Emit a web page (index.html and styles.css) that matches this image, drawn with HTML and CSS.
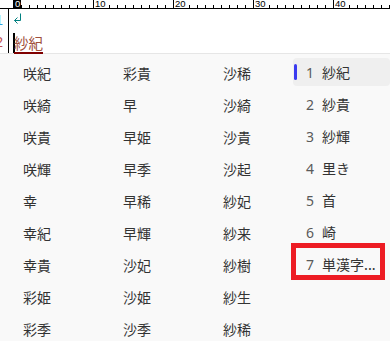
FILE: index.html
```html
<!DOCTYPE html>
<html lang="ja">
<head>
<meta charset="utf-8">
<link rel="stylesheet" href="styles.css">
</head>
<body>
<div class="ruler">
  <div class="grp"><span class="lbl cur">0</span></div>
  <div class="grp"><span class="lbl">10</span></div>
  <div class="grp"><span class="lbl">20</span></div>
  <div class="grp"><span class="lbl">30</span></div>
  <div class="grp last"><span class="lbl">40</span></div>
</div>
<div class="editor">
  <div class="gutter">
    <div class="ln ln1"><span>1</span></div>
    <div class="ln ln2"><span>2</span></div>
  </div>
  <div class="lines">
    <div class="line">
      <svg class="ret" width="9" height="11" viewBox="0 0 9 11"><path d="M7.5 0.5 V7.5 H1.5 M4.5 4.5 L1.5 7.5 L4.5 10.5" fill="none" stroke="#008080" stroke-width="1"/></svg>
    </div>
    <div class="line"><span class="caret"></span><span class="comp">紗紀</span></div>
  </div>
</div>
<div class="panel">
  <div class="col c1">
    <div class="cand">咲紀</div><div class="cand">咲綺</div><div class="cand">咲貴</div><div class="cand">咲輝</div><div class="cand">幸</div><div class="cand">幸紀</div><div class="cand">幸貴</div><div class="cand">彩姫</div><div class="cand">彩季</div>
  </div>
  <div class="col c2">
    <div class="cand">彩貴</div><div class="cand">早</div><div class="cand">早姫</div><div class="cand">早季</div><div class="cand">早稀</div><div class="cand">早輝</div><div class="cand">沙妃</div><div class="cand">沙姫</div><div class="cand">沙季</div>
  </div>
  <div class="col c3">
    <div class="cand">沙稀</div><div class="cand">沙綺</div><div class="cand">沙貴</div><div class="cand">沙起</div><div class="cand">紗妃</div><div class="cand">紗来</div><div class="cand">紗樹</div><div class="cand">紗生</div><div class="cand">紗稀</div>
  </div>
  <div class="col c4">
    <div class="item sel"><span class="num">1</span><span class="txt">紗紀</span></div>
    <div class="item"><span class="num">2</span><span class="txt">紗貴</span></div>
    <div class="item"><span class="num">3</span><span class="txt">紗輝</span></div>
    <div class="item"><span class="num">4</span><span class="txt">里き</span></div>
    <div class="item"><span class="num">5</span><span class="txt">首</span></div>
    <div class="item"><span class="num">6</span><span class="txt">崎</span></div>
    <div class="item marked"><span class="num">7</span><span class="txt">単漢字...</span><span class="redbox"></span></div>
  </div>
</div>
</body>
</html>
```
FILE: styles.css
```css
* { box-sizing: border-box; }
html, body { margin: 0; padding: 0; }
body {
  width: 390px;
  height: 341px;
  overflow: hidden;
  background: #ffffff;
  font-family: "Noto Sans CJK JP", "Noto Sans", sans-serif;
}

/* ruler */
.ruler {
  height: 9px;
  padding-left: 13px;
  display: flex;
  border-bottom: 1px solid #000;
  background: repeating-linear-gradient(90deg, #000 0 1px, transparent 1px 8px) 13px 100% / calc(100% - 13px) 3px no-repeat;
  background-color: #fff;
}
.grp {
  flex: 0 0 80px;
  height: 8px;
  border-left: 1px solid #000;
  display: flex;
}
.grp.last { flex-basis: 57px; }
.lbl {
  font-family: "Liberation Sans", "DejaVu Sans", sans-serif;
  font-size: 9.5px;
  line-height: 8px;
  height: 8px;
  padding: 0 1px 0 1px;
  color: #000;
  background: #fff;
}
.lbl.cur {
  background: #000;
  color: #fff;
  margin-left: -1px;
  padding: 0 1px 0 2px;
}

/* editor */
.editor {
  display: flex;
  height: 44px;
}
.gutter {
  width: 9px;
  border-right: 1px solid #000;
  overflow: hidden;
  padding-right: 5px;
  font-family: "Liberation Sans", sans-serif;
  font-size: 14px;
}
.ln {
  height: 22px;
  line-height: 22px;
  display: flex;
  justify-content: flex-end;
  white-space: nowrap;
}
.ln1 { color: #2f9fdc; }
.ln2 { color: #c05050; }
.lines {
  padding-left: 4px;
}
.line {
  height: 22px;
  display: flex;
  align-items: center;
}
.ret { display: block; margin-top: -4px; }
.caret {
  width: 2px;
  height: 20px;
  background: #000;
  margin-right: -1px;
  margin-top: 1px;
}
.comp {
  font-size: 14.5px;
  line-height: 18px;
  color: #a0503c;
  border-bottom: 2px solid #800000;
  margin-top: 4px;
}

/* candidate panel */
.panel {
  border-top: 1px solid #e6e6e6;
  background: #f9f9f9;
  height: 300px;
  display: flex;
  padding-top: 3px;
  padding-left: 23px;
}
.col { display: flex; flex-direction: column; }
.c1, .c2 { width: 100px; }
.c3 { width: 70px; }
.c4 { width: 97px; }
.cand {
  height: 32px;
  line-height: 32px;
  font-size: 14px;
  color: #333333;
  white-space: nowrap;
}
.item {
  position: relative;
  height: 28px;
  margin: 1px 0 3px;
  border-radius: 4px;
  display: flex;
  align-items: center;
  font-size: 14px;
  white-space: nowrap;
}
.item::before {
  content: "";
  width: 3px;
  height: 16px;
  margin-left: 1px;
  border-radius: 2px;
  background: transparent;
}
.item.sel { background: #efefef; }
.item.sel::before { background: #3b3bf0; }
.num {
  width: 16px;
  margin-left: 9px;
  font-family: "Noto Sans", sans-serif;
  color: #5a5a5a;
}
.txt { color: #333333; }
.redbox {
  position: absolute;
  left: -2px;
  top: -7px;
  width: 94px;
  height: 37px;
  border: 5px solid #ed1c24;
}
```
